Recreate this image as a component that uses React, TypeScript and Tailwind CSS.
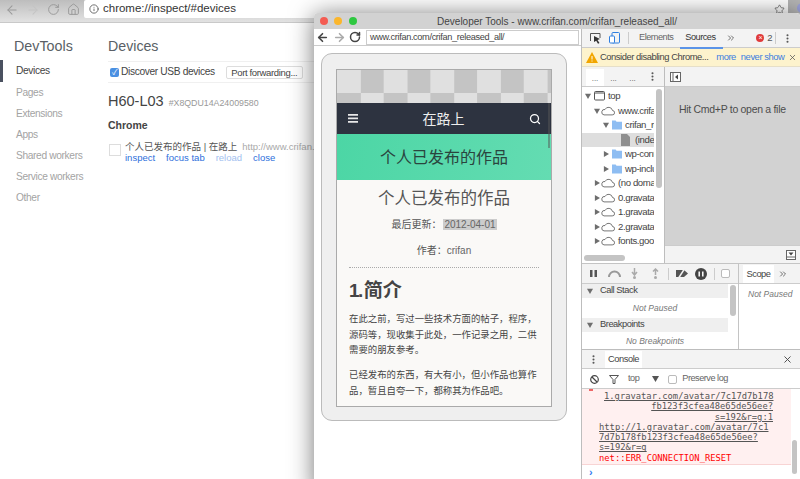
/**
 * Chrome inspect page with a remote DevTools window on top of it
 */
import { ArrowLeft, ArrowRight, ChevronsRight, Home, Info, MoreVertical, RotateCw, Search, Star, X } from 'lucide-react';

const FONT = "font-['Liberation_Sans','Noto_Sans_CJK_SC',sans-serif]";

const sideItems = ['Pages', 'Extensions', 'Apps', 'Shared workers', 'Service workers', 'Other'];

interface TreeRow {
  label: string;
  depth: number;
  kind: 'frame' | 'cloud' | 'folder' | 'file';
  open?: boolean;
  selected?: boolean;
}

const treeRows: TreeRow[] = [
  { label: 'top', depth: 0, kind: 'frame', open: true },
  { label: 'www.crifan.com', depth: 1, kind: 'cloud', open: true },
  { label: 'crifan_released_all', depth: 2, kind: 'folder', open: true },
  { label: '(index)', depth: 3, kind: 'file', selected: true },
  { label: 'wp-content', depth: 2, kind: 'folder' },
  { label: 'wp-includes', depth: 2, kind: 'folder' },
  { label: '(no domain)', depth: 1, kind: 'cloud' },
  { label: '0.gravatar.com', depth: 1, kind: 'cloud' },
  { label: '1.gravatar.com', depth: 1, kind: 'cloud' },
  { label: '2.gravatar.com', depth: 1, kind: 'cloud' },
  { label: 'fonts.googleapis', depth: 1, kind: 'cloud' },
];

function Caret({ open }: { open?: boolean }) {
  return (
    <svg width="6" height="6" viewBox="0 0 7 7" className="shrink-0">
      <path d={open ? 'M0 1h7L3.5 7z' : 'M1 0l6 3.5L1 7z'} fill="#6e6e6e" />
    </svg>
  );
}

function TreeIcon({ kind }: { kind: TreeRow['kind'] }) {
  if (kind === 'frame') {
    return (
      <svg width="11" height="10" viewBox="0 0 11 10" className="shrink-0">
        <rect x="0.5" y="0.5" width="10" height="8.5" rx="1" fill="none" stroke="#555" />
        <path d="M1 2h9" stroke="#555" />
      </svg>
    );
  }
  if (kind === 'cloud') {
    return (
      <svg width="14" height="10" viewBox="0 0 14 9" className="shrink-0 -ml-[2px]">
        <path d="M3 8.4h8.2a2.2 2.2 0 0 0 .3-4.4A4 4 0 0 0 4 3 2.7 2.7 0 0 0 3 8.4z" fill="none" stroke="#666" strokeWidth="0.9" />
      </svg>
    );
  }
  if (kind === 'folder') {
    return (
      <svg width="10" height="10" viewBox="0 0 11 10" className="shrink-0">
        <path d="M0 0h4l1 1.500h6V10H0z" fill="#8ebdf2" />
      </svg>
    );
  }
  return (
    <svg width="9" height="12" viewBox="0 0 9 12" className="shrink-0 mr-[2px]">
      <path d="M0 0h6l3 3v9H0z" fill="#8f8f8f" />
    </svg>
  );
}

function Sources() {
  return (
    <div className="flex h-[197px] border-b border-[#c4c4c4]">
      {/* Navegador de archivos */}
      <div className="w-[83px] shrink-0 flex flex-col border-r border-[#bdbdbd] overflow-hidden">
        <div className="h-[20px] shrink-0 flex items-end bg-[#f3f3f3] border-b border-[#ccc] pl-[4px] relative text-[8px] text-[#555]">
          <span className="w-[18px] h-[17px] bg-white text-center leading-[20px]">...</span>
          <span className="w-[19px] h-[17px] text-center leading-[20px]">...</span>
          <span className="w-[19px] h-[17px] text-center leading-[20px]">...</span>
          <MoreVertical size={11} strokeWidth={2.5} className="absolute right-[6px] top-[4px] text-[#555]" />
        </div>
        <div className="flex-1 relative overflow-hidden pt-[2px]">
          {treeRows.map((row) => (
            <div
              key={row.label}
              className={`h-[14.500px] flex items-center gap-[3px] text-[9.600px] tracking-[-0.4px] text-[#444] whitespace-nowrap ${row.selected ? 'bg-[#dedede]' : ''}`}
            >
              <span className="shrink-0" style={{ width: row.depth * 9 }} />
              {row.kind === 'file' ? <span className="w-[6px] shrink-0" /> : <Caret open={row.open} />}
              <TreeIcon kind={row.kind} />
              <span>{row.label}</span>
            </div>
          ))}
          <div className="absolute right-0 top-0 bottom-0 w-[10px] bg-white">
            <div className="absolute left-[2px] top-[2px] w-[6px] h-[99px] rounded-full bg-[#c4c4c4]" />
          </div>
          <div className="absolute left-0 right-0 bottom-0 h-[12px] bg-white">
            <div className="absolute left-[2px] top-[4px] w-[41px] h-[6px] rounded-full bg-[#c4c4c4]" />
          </div>
        </div>
      </div>
      {/* Editor vacío */}
      <div className="flex-1 flex flex-col">
        <div className="h-[20px] shrink-0 flex items-center pl-[5px] bg-[#f3f3f3] border-b border-[#ccc]">
          <svg width="11" height="10" viewBox="0 0 11 10">
            <rect x="0.5" y="0.5" width="10" height="9" fill="#fff" stroke="#666" />
            <path d="M3 0v10" stroke="#666" />
            <path d="M8 2.500v5L5 5z" fill="#444" />
          </svg>
        </div>
        <div className="flex-1 bg-[#d2d2d2] pt-[15px] pl-[14px] text-[10.500px] tracking-[-0.3px] text-[#4d4d4d]">Hit Cmd+P to open a file</div>
        <div className="h-[18px] shrink-0 flex items-center justify-end pr-[4px] bg-[#f3f3f3] border-t border-[#ccc]">
          <svg width="10" height="10" viewBox="0 0 10 10">
            <rect x="0.500" y="0.500" width="9" height="9" fill="#fff" stroke="#666" />
            <path d="M0 7h10" stroke="#666" />
            <path d="M2.500 2.500h5L5 5.500z" fill="#444" />
          </svg>
        </div>
      </div>
    </div>
  );
}

function Debugger() {
  return (
    <div className="flex h-[86px] border-b border-[#bdbdbd]">
      <div className="w-[157px] shrink-0 flex flex-col border-r border-[#c4c4c4] relative">
        <div className="h-[20px] shrink-0 flex items-center pl-[7px] bg-[#f3f3f3] border-b border-[#ccc]">
          <svg width="9" height="9" viewBox="0 0 9 9"><path d="M1 1h2.500v7H1zM5.500 1H8v7H5.500z" fill="#555" /></svg>
          <svg width="13" height="8" viewBox="0 0 13 8" className="ml-[10px]"><path d="M1 7a5.500 5.500 0 0 1 11 0" fill="none" stroke="#999" strokeWidth="2" /></svg>
          <svg width="9" height="11" viewBox="0 0 9 11" className="ml-[9px]"><path d="M4.500 0v6M2 4l2.500 3L7 4" fill="none" stroke="#aaa" strokeWidth="1.500" /><circle cx="4.500" cy="9.500" r="1.500" fill="#aaa" /></svg>
          <svg width="9" height="11" viewBox="0 0 9 11" className="ml-[12px]"><path d="M4.500 7V1M2 3.500L4.500 1 7 3.500" fill="none" stroke="#aaa" strokeWidth="1.500" /><circle cx="4.500" cy="9.500" r="1.500" fill="#aaa" /></svg>
          <span className="ml-[8px] w-px h-[12px] bg-[#ccc]" />
          <svg width="14" height="11" viewBox="0 0 14 11" className="ml-[6px]"><path d="M1 2h8l4 3.500L9 9H1z" fill="#555" /><path d="M3 11l7-11" stroke="#f3f3f3" strokeWidth="1.500" /></svg>
          <svg width="12" height="12" viewBox="0 0 12 12" className="ml-[6px]"><circle cx="6" cy="6" r="6" fill="#444" /><path d="M4.200 3.500v5M7.800 3.500v5" stroke="#fff" strokeWidth="1.500" /></svg>
          <span className="ml-[7px] w-px h-[12px] bg-[#ccc]" />
          <span className="ml-[6px] w-[9px] h-[9px] rounded-[2px] border border-[#bbb] bg-white" />
        </div>
        <div className="h-[14px] shrink-0 flex items-center gap-[7px] pl-[5px] bg-[#efefef] text-[9.300px] tracking-[-0.45px] text-[#444]"><Caret open />Call Stack</div>
        <div className="h-[20px] shrink-0 pr-[10px] flex items-center justify-center italic text-[8.500px] text-[#777]">Not Paused</div>
        <div className="h-[14px] shrink-0 flex items-center gap-[7px] pl-[5px] bg-[#efefef] text-[9.300px] tracking-[-0.45px] text-[#444]"><Caret open />Breakpoints</div>
        <div className="h-[18px] shrink-0 pr-[10px] flex items-center justify-center italic text-[8.500px] text-[#777]">No Breakpoints</div>
        <div className="absolute right-0 top-[20px] bottom-0 w-[10px] bg-white">
          <div className="absolute left-[2px] top-[1px] w-[6px] h-[31px] rounded-full bg-[#c4c4c4]" />
        </div>
      </div>
      <div className="flex-1 flex flex-col">
        <div className="h-[20px] shrink-0 flex items-end pl-[4px] bg-[#f3f3f3] border-b border-[#ccc]">
          <span className="w-[31px] h-[18px] bg-white text-center text-[9.300px] tracking-[-0.45px] leading-[18px] text-[#444]">Scope</span>
          <ChevronsRight size={10} className="ml-[4px] mb-[4px] text-[#555]" />
        </div>
        <div className="pl-[9px] pt-[4px] italic text-[8.500px] text-[#777]">Not Paused</div>
      </div>
    </div>
  );
}

function ConsoleDrawer() {
  return (
    <div className="flex-1 flex flex-col min-h-0">
      <div className="h-[19px] shrink-0 flex items-end pl-[6px] pr-[7px] bg-[#f3f3f3] border-b border-[#ccc] relative">
        <MoreVertical size={11} strokeWidth={2.500} className="mb-[3px] text-[#555]" />
        <span className="ml-[6px] w-[37px] h-[17px] bg-white text-center text-[9.300px] tracking-[-0.45px] leading-[17px] text-[#444]">Console</span>
        <X size={11} strokeWidth={2} className="ml-auto mb-[3px] text-[#444]" />
      </div>
      <div className="h-[20px] shrink-0 flex items-center pl-[8px] pt-[1px] border-b border-[#ccc] text-[9.200px] tracking-[-0.5px] text-[#666]">
        <svg width="9" height="9" viewBox="0 0 9 9"><circle cx="4.500" cy="4.500" r="3.800" fill="none" stroke="#444" strokeWidth="1.200" /><path d="M2 2l5 5" stroke="#444" strokeWidth="1.200" /></svg>
        <svg width="10" height="9" viewBox="0 0 10 9" className="ml-[10px]"><path d="M0.500 0.500h9L6 4.500V8.500H4V4.500z" fill="none" stroke="#555" /></svg>
        <span className="ml-[9px]">top</span>
        <svg width="7" height="6" viewBox="0 0 7 6" className="ml-[13px]"><path d="M0 0h7L3.500 6z" fill="#555" /></svg>
        <span className="ml-[9px] w-[9px] h-[9px] rounded-[2px] border border-[#bbb] bg-white" />
        <span className="ml-[5px]">Preserve log</span>
      </div>
      <div className="flex-1 flex min-h-0">
        <div className="flex-1 flex flex-col min-w-0">
          <div className="h-[76px] shrink-0 relative bg-[#fff0f0] border-b border-[#f8d4d4] pl-[17px] pt-[2px] font-['DejaVu_Sans_Mono',monospace] text-[8.800px] leading-[10.300px] text-[#555] whitespace-nowrap overflow-hidden">
            <span className="absolute left-[7px] top-0 w-[4px] h-[2px] bg-[#e66]" />
            <div className="pl-[5px] underline">1.gravatar.com/avatar/7c17d7b178</div>
            <div className="w-[174px] text-right underline">fb123f3cfea48e65de56ee?</div>
            <div className="w-[174px] text-right underline">s=192&amp;r=g:1</div>
            <div className="underline">http://1.gravatar.com/avatar/7c1</div>
            <div className="underline">7d7b178fb123f3cfea48e65de56ee?</div>
            <div className="underline">s=192&amp;r=g</div>
            <div className="text-[#f00]">net::ERR_CONNECTION_RESET</div>
          </div>
          <div className="pl-[7px] pt-px text-[11px] leading-[12px] font-bold text-[#367cf1]">›</div>
        </div>
        <div className="w-[9px] shrink-0 relative">
          <div className="absolute left-px top-[51px] w-[5px] h-[34px] rounded-full bg-[#c4c4c4]" />
        </div>
      </div>
    </div>
  );
}

function DevToolsPanel() {
  return (
    <div className="w-[219px] shrink-0 flex flex-col border-l border-[#bdbdbd] bg-white">
      <div className="h-[19px] shrink-0 flex items-center pl-[8px] pr-[8px] bg-[#f3f3f3] border-b border-[#ccc] text-[9.200px] tracking-[-0.5px] text-[#555]">
        <svg width="11" height="11" viewBox="0 0 11 11">
          <path d="M0.500 8V0.500H10V5" fill="none" stroke="#555" />
          <path d="M4 3l6 3-2.500 1 2 3-1.500.8-1.800-3L4 9z" fill="#333" />
        </svg>
        <svg width="11" height="12" viewBox="0 0 11 12" className="ml-[8px]">
          <rect x="3" y="0.500" width="7.500" height="10.500" rx="1" fill="none" stroke="#2f7fe0" />
          <rect x="0.500" y="4" width="5" height="7" rx="1" fill="#fff" stroke="#2f7fe0" />
        </svg>
        <span className="ml-[8px] w-px h-[12px] bg-[#ccc]" />
        <span className="ml-[10px] text-[#666]">Elements</span>
        <span className="ml-[12px] relative text-[#333]">
          Sources
          <span className="absolute left-[-5px] right-[-7px] bottom-[-4px] h-[2px] bg-[#5a93e8]" />
        </span>
        <ChevronsRight size={10} className="ml-[10px] text-[#555]" />
        <span className="ml-auto flex items-center gap-[3px] text-[9.500px] text-[#555]">
          <span className="w-[8px] h-[8px] rounded-full bg-[#e03b3b] text-white text-[7px] leading-[8px] text-center">×</span>2
        </span>
        <span className="ml-[3px] w-px h-[12px] bg-[#ccc]" />
        <MoreVertical size={11} strokeWidth={2.500} className="ml-[6px] -mr-px" />
      </div>
      <div className="h-[19px] shrink-0 flex items-center pl-[4px] bg-[#fdf3cd] border-b border-[#e6dfc8] text-[9.400px] tracking-[-0.45px] text-[#444] whitespace-nowrap">
        <svg width="12" height="11" viewBox="0 0 12 11" className="shrink-0"><path d="M6 0l6 11H0z" fill="#f2a600" /><path d="M6 4v3.500M6 8.500v1" stroke="#fff" /></svg>
        <span className="ml-[2px]">Consider disabling Chrome...</span>
        <span className="ml-[8px] text-[#3b7de0]">more</span>
        <span className="ml-[5px] text-[#3b7de0]">never show</span>
        <X size={9} strokeWidth={2} className="ml-[4px] text-[#555]" />
      </div>
      <Sources />
      <Debugger />
      <ConsoleDrawer />
    </div>
  );
}

function PhonePreview() {
  return (
    <div className="flex-1 flex flex-col min-w-0 bg-white">
      <div className="h-[17px] shrink-0 flex items-center pl-[2px] pr-[2px] border-b border-[#ccc]">
        <ArrowLeft size={13} strokeWidth={3} className="text-[#444]" />
        <ArrowRight size={13} strokeWidth={3} className="ml-[4px] text-[#aaa]" />
        <RotateCw size={12} strokeWidth={3} className="ml-[3px] text-[#444]" />
        <div className="ml-[5px] flex-1 h-[15px] border border-[#ccc] pl-[3px] text-[9.200px] tracking-[-0.35px] leading-[13px] text-[#444]">www.crifan.com/crifan_released_all/</div>
      </div>
      <div className="pt-[7px] pl-[7px]">
        <div className="w-[246px] h-[368px] rounded-[11px] border border-[#bbb] bg-[#efefef] pt-[15px] pl-[14px]">
          <div className="w-[216px] h-[338px] border border-[#aaa] flex flex-col overflow-hidden relative">
            <div className="h-[33px] shrink-0 bg-[linear-gradient(90deg,#e0e0e0_50%,#c4c4c4_50%)] bg-[length:46.700px_24px] bg-repeat-x relative">
              <div className="absolute left-0 right-0 bottom-0 h-[10px] bg-[linear-gradient(90deg,#c4c4c4_50%,#e0e0e0_50%)] bg-[length:46.700px_10px]" />
            </div>
            <div className="h-[31px] shrink-0 bg-[#2d3340] flex items-center pl-[11px] pr-[10px] text-white">
              <svg width="10" height="9" viewBox="0 0 10 9"><path d="M0 0h10v1.800H0zM0 3.500h10v1.800H0zM0 7h10v1.800H0z" fill="#e8e8e8" /></svg>
              <span className="flex-1 pt-[2px] text-center text-[14px] text-[#eee]">在路上</span>
              <Search size={12} strokeWidth={2.500} />
            </div>
            <div className="h-[46px] shrink-0 pt-[2px] bg-[linear-gradient(100deg,#4cd6a5,#64dcb2)] flex items-center justify-center text-[16px] text-[#2a453e]">个人已发布的作品</div>
            <div className="flex-1 bg-[#faf9f7] px-[12px] text-[#555] overflow-hidden">
              <div className="mt-[6px] text-center text-[16.500px] leading-[24px] text-[#555]">个人已发布的作品</div>
              <div className="mt-[8px] text-center text-[10px] leading-[14px]">
                最后更新：<span className="ml-[2px] bg-[#ccc] px-px text-[#666]">2012-04-01</span>
              </div>
              <div className="mt-[12px] pb-[9px] text-center text-[10px] leading-[14px] border-b border-dotted border-[#aaa]">作者：<span className="text-[#666]">crifan</span></div>
              <div className="mt-[9px] h-[27px] flex items-center text-[19px] leading-[26px] font-bold text-[#444]">
                <span className="tracking-[-1.500px] mr-[2px]">1.</span>简介
              </div>
              <p className="mt-[7px] text-[9.400px] leading-[15.700px] text-[#444]">在此之前，写过一些技术方面的帖子，程序，源码等，现收集于此处，一作记录之用，二供需要的朋友参考。</p>
              <p className="mt-[9px] text-[9.400px] leading-[15.700px] text-[#444]">已经发布的东西，有大有小，但小作品也算作品，暂且自夸一下，都称其为作品吧。</p>
            </div>
            <div className="absolute right-px top-[33px] w-[2px] h-[45px] bg-[#555]/50" />
          </div>
        </div>
      </div>
    </div>
  );
}

export default function App() {
  return (
    <div className={`w-[800px] h-[479px] relative overflow-hidden bg-white ${FONT}`}>
      {/* Barra de Chrome */}
      <div className="h-[23px] flex bg-[linear-gradient(#bdbdbd,#e2e2e2)] border-b border-[#c9c9c9]">
        <div className="w-[84px] shrink-0 flex items-center pl-[5px] pb-[3px] gap-[7px] text-[#999]">
          <ArrowLeft size={14} strokeWidth={1.800} />
          <ArrowRight size={14} strokeWidth={1.800} className="text-[#c4c4c4]" />
          <RotateCw size={13} strokeWidth={1.800} />
          <Home size={13} strokeWidth={1.800} />
        </div>
        <div className="w-[704px] h-[18px] shrink-0 bg-white rounded-l-[2px] flex items-center pl-[5px] pr-[3px] text-[11.500px] text-[#333]">
          <Info size={10} strokeWidth={2} className="text-[#555]" />
          <span className="ml-[4px]">chrome://inspect/#devices</span>
          <Star size={11} strokeWidth={1.500} className="ml-auto text-[#555]" />
        </div>
        <div className="flex-1 h-[13px] bg-[#b4b4b4] relative overflow-hidden">
          <span className="absolute left-[9px] top-[3px] w-[10px] h-[10px] rounded-full bg-[#9aa0d8]" />
        </div>
      </div>

      {/* Página de dispositivos */}
      <div className="flex">
        <div className="w-[108px] shrink-0">
          <div className="pl-[14px] pt-[14px] text-[14.300px] leading-[18px] text-[#5a5f66]">DevTools</div>
          <div className="mt-[5px] border-l-[3px] border-[#4a5160] pl-[13px] h-[22px] leading-[22px] text-[10.200px] tracking-[-0.35px] text-[#444]">Devices</div>
          {sideItems.map((item) => (
            <div key={item} className="pl-[16px] h-[21px] leading-[21px] text-[10.200px] tracking-[-0.35px] text-[#a3a3a3]">{item}</div>
          ))}
        </div>
        <div className="flex-1 min-w-0">
          <div className="pt-[14px] text-[14.200px] leading-[18px] text-[#5a5f66]">Devices</div>
          <div className="mt-[6px] w-[208px] h-[22px] flex items-center border-y border-[#f0f0f0] text-[10.200px] tracking-[-0.35px] text-[#444]">
            <span className="ml-[2px] w-[9px] h-[9px] rounded-[2px] bg-[#4a90e2] text-white text-[8px] leading-[9px] text-center">✓</span>
            <span className="ml-[2px]">Discover USB devices</span>
            <span className="ml-[11px] w-[77px] h-[13px] border border-[#ddd] rounded-[2px] text-center text-[9.500px] leading-[11px]">Port forwarding...</span>
          </div>
          <div className="mt-[9px] flex items-baseline gap-[5px]">
            <span className="text-[14.500px] leading-[18px] text-[#444]">H60-L03</span>
            <span className="text-[8.800px] text-[#999]">#X8QDU14A24009580</span>
          </div>
          <div className="mt-[8px] text-[10.500px] leading-[14px] font-bold text-[#444]">Chrome</div>
          <div className="mt-[9px] flex">
            <span className="ml-px mt-[3px] w-[12px] h-[12px] border border-[#ddd] shrink-0" />
            <div className="ml-[4px] whitespace-nowrap text-[9.500px] leading-[11px]">
              <div className="text-[#555]">个人已发布的作品 | 在路上<span className="ml-[5px] text-[#aaa]">http://www.crifan.</span></div>
              <div className="flex text-[#2e6fdc]">
                <span>inspect</span>
                <span className="ml-[11px]">focus tab</span>
                <span className="ml-[11px] text-[#a3c1ef]">reload</span>
                <span className="ml-[11px]">close</span>
              </div>
            </div>
          </div>
        </div>
      </div>

      {/* Ventana de herramientas de desarrollo */}
      <div className="absolute left-[314px] top-[13px] w-[486px] h-[480px] flex flex-col bg-white rounded-t-[4px] shadow-[0_2px_24px_rgba(0,0,0,0.55)]">
        <div className="h-[16px] shrink-0 relative bg-[#d2d2d2] rounded-t-[4px] flex items-center justify-center text-[10px] text-[#444]">
          <span className="absolute left-[6px] top-[4px] w-[8px] h-[8px] rounded-full bg-[#f45c52]" />
          <span className="absolute left-[20px] top-[4px] w-[8px] h-[8px] rounded-full bg-[#fbb62c]" />
          <span className="absolute left-[35px] top-[4px] w-[8px] h-[8px] rounded-full bg-[#2ec840]" />
          Developer Tools - www.crifan.com/crifan_released_all/
        </div>
        <div className="flex-1 flex min-h-0">
          <PhonePreview />
          <DevToolsPanel />
        </div>
      </div>
    </div>
  );
}
